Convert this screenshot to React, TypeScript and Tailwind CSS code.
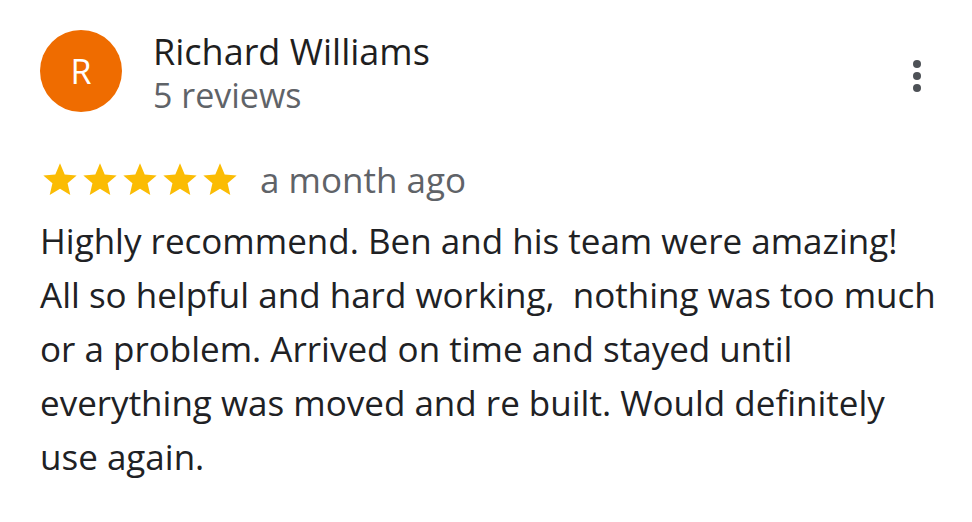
function Star() {
  return (
    <svg viewBox="0 0 24 24" className="w-[40px] h-[40px]" fill="#fbbc04">
      <path d="M12 17.27 18.18 21l-1.64-7.03L22 9.24l-7.19-.61L12 2 9.19 8.63 2 9.24l5.46 4.73L5.82 21z" />
    </svg>
  );
}

function Kebab() {
  return (
    <svg width="16" height="36" viewBox="0 0 16 36" fill="#4d5156">
      <circle cx="8" cy="6" r="4" />
      <circle cx="8" cy="18" r="4" />
      <circle cx="8" cy="30" r="4" />
    </svg>
  );
}

export default function App() {
  return (
    <div className="w-[972px] h-[522px] bg-white font-['Open_Sans',sans-serif] pl-[40px] pr-[30px] pt-[30px]">
      {/* header */}
      <div className="flex items-start">
        <div className="w-[82px] h-[82px] rounded-full bg-[#ef6c00] text-white flex items-center justify-center text-[34px] shrink-0">
          R
        </div>
        <div className="ml-[31px] -mt-[1px] flex-1">
          <div className="text-[36px] leading-[46px] text-[#1f1f1f]">Richard Williams</div>
          <div className="text-[34px] leading-[40px] text-[#5f6368]">5 reviews</div>
        </div>
        <div className="mt-[28px] mr-[17px]">
          <Kebab />
        </div>
      </div>

      {/* rating */}
      <div className="flex items-center mt-[39px]">
        <div className="flex">
          {[0, 1, 2, 3, 4].map((i) => (
            <Star key={i} />
          ))}
        </div>
        <span className="ml-[20px] text-[35px] text-[#5f6368]">a month ago</span>
      </div>

      {/* body */}
      <p className="mt-[7px] text-[35px] leading-[54px] text-[#202124] whitespace-nowrap">
        Highly recommend. Ben and his team were amazing!
        <br />
        All so helpful and hard working,&nbsp; nothing was too much
        <br />
        or a problem. Arrived on time and stayed until
        <br />
        everything was moved and re built. Would definitely
        <br />
        use again.
      </p>
    </div>
  );
}
